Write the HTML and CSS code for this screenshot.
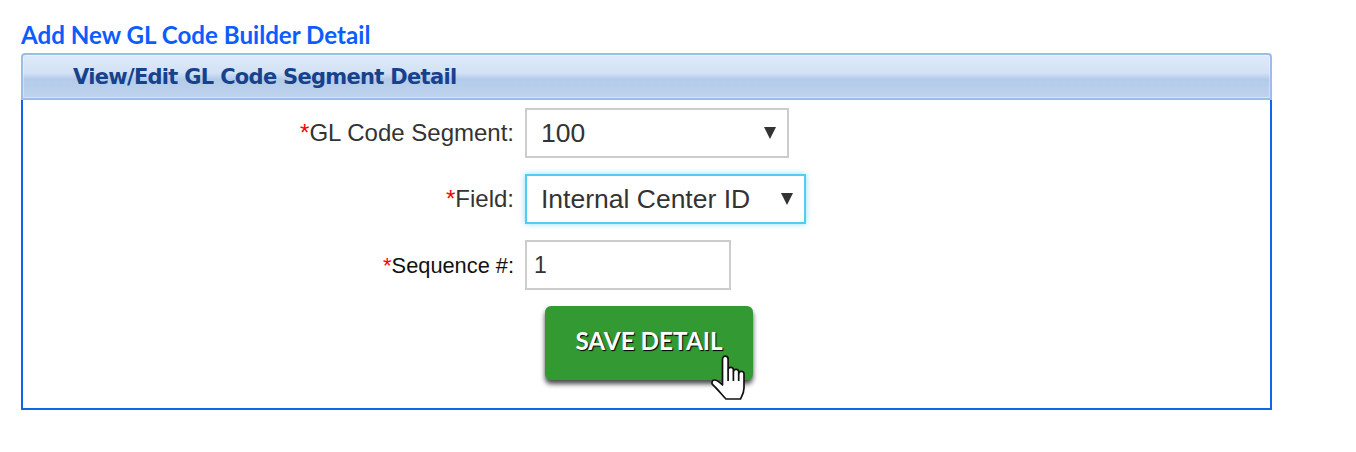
FILE: index.html
```html
<!DOCTYPE html>
<html lang="en">
<head>
    <meta charset="UTF-8">
    <meta name="viewport" content="width=device-width, initial-scale=1.0">
    <title>Add New GL Code Builder Detail</title>
    <link rel="stylesheet" href="styles.css">
</head>
<body>
    <h1 class="page-title">Add New GL Code Builder Detail</h1>
    <div class="panel">
        <div class="panel-header">View/Edit GL Code Segment Detail</div>
        <form class="panel-body">
            <label class="field-label"><span class="req">*</span>GL Code Segment:</label>
            <div class="select-wrap seg">
                <select class="field-select">
                    <option>100</option>
                </select>
            </div>

            <label class="field-label"><span class="req">*</span>Field:</label>
            <div class="select-wrap fld focused">
                <select class="field-select">
                    <option>Internal Center ID</option>
                </select>
            </div>

            <label class="field-label seq"><span class="req">*</span>Sequence #:</label>
            <input class="field-input" type="text" value="1">

            <div class="actions">
                <button class="save-btn" type="button">SAVE DETAIL</button>
                <svg class="hand" width="36" height="48" viewBox="0 0 36 48">
                    <path d="M12.500 29V5a2.800 2.800 0 0 1 5.600 0V15.500a2.700 2.700 0 0 1 5.300 0V17.500a2.700 2.700 0 0 1 5.300 0V19.500a2.700 2.700 0 0 1 5.300 0V34c0 5-2 8-3.500 11H16C12 41 7.500 35 3 31C1 29 2 26 4.500 26C7.500 26 10 28.500 12.500 31Z" fill="#fff" stroke="#111" stroke-width="1.700" stroke-linejoin="round"/>
                    <path d="M18.100 15.500V27M23.400 17.500V27M28.700 19.500V27" fill="none" stroke="#111" stroke-width="1.700"/>
                </svg>
            </div>
        </form>
    </div>
</body>
</html>
```

FILE: styles.css
```css
body {
    margin: 0;
    padding: 21px 0 0 21px;
    background: #fff;
    font-family: "Liberation Sans", Arial, sans-serif;
}
.page-title {
    margin: 0 0 5px;
    font-family: Lato, sans-serif;
    font-size: 24.15px;
    line-height: 27px;
    font-weight: 700;
    color: #0d5cff;
}
.panel {
    width: 1251px;
}
.panel-header {
    box-sizing: border-box;
    height: 47px;
    padding: 8px 0 0 50px;
    border: 2px solid #9dbde8;
    border-radius: 4px 4px 0 0;
    background: linear-gradient(#deeaf8 0%, #d2e1f4 42%, #b3cbea 56%, #bfd3ed 100%);
    box-shadow: inset 0 0 0 1px rgba(255,255,255,0.35);
    font-family: "DejaVu Sans", Verdana, sans-serif;
    font-size: 21px;
    letter-spacing: -0.7px;
    line-height: 28px;
    font-weight: 700;
    color: #17418c;
}
.panel-body {
    box-sizing: border-box;
    height: 310px;
    padding-top: 8px;
    border: 2px solid #0f66ea;
    border-top: none;
    display: grid;
    grid-template-columns: 491px 1fr;
    grid-auto-rows: 50px;
    row-gap: 16px;
    column-gap: 11px;
    align-items: center;
}
.field-label {
    text-align: right;
    font-size: 24px;
    color: #333;
}
.field-label.seq {
    padding-top: 2px;
    font-size: 21.8px;
    color: #111;
}
.req {
    color: #f00;
}
.select-wrap {
    position: relative;
    height: 50px;
}
.select-wrap.seg { width: 264px; }
.select-wrap.fld { width: 281px; }
.select-wrap::after {
    content: "";
    position: absolute;
    right: 13px;
    top: 19px;
    border-left: 6px solid transparent;
    border-right: 6px solid transparent;
    border-top: 12px solid #333;
}
.field-select {
    box-sizing: border-box;
    width: 100%;
    height: 50px;
    padding: 0 0 0 14px;
    border: 2px solid #ccc;
    border-radius: 0;
    background: #fff;
    font-family: "Liberation Sans", Arial, sans-serif;
    font-size: 26.5px;
    color: #333;
    appearance: none;
}
.focused .field-select {
    border-color: #52cdf0;
    box-shadow: 0 0 6px #8fe0f7;
}
.field-input {
    box-sizing: border-box;
    width: 206px;
    height: 50px;
    padding: 0 7px;
    border: 2px solid #ccc;
    background: #fff;
    font-family: "Liberation Sans", Arial, sans-serif;
    font-size: 23px;
    color: #333;
}
.actions {
    grid-column: 2;
    position: relative;
    padding-left: 20px;
    height: 74px;
    align-self: start;
}
.save-btn {
    box-sizing: border-box;
    width: 208px;
    height: 74px;
    padding: 0 0 5px;
    border: none;
    border-radius: 6px;
    background: #339933;
    box-shadow: 0 4px 5px #4a4a4a;
    font-family: Lato, sans-serif;
    font-size: 24.3px;
    font-weight: 700;
    color: #fff;
    text-shadow: 1px 1px 1px #000;
    cursor: pointer;
}
.hand {
    position: absolute;
    left: 185px;
    top: 48px;
}
```
